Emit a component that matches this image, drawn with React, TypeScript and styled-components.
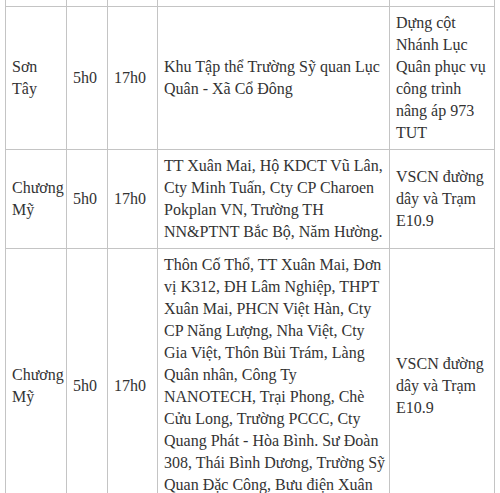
import styled, { createGlobalStyle } from 'styled-components';

const GlobalStyle = createGlobalStyle`
  html, body {
    margin: 0;
    padding: 0;
    background: #fff;
  }
  body {
    font-family: 'Liberation Serif', 'Times New Roman', serif;
    color: #333;
    overflow: hidden;
  }
`;

const Wrapper = styled.div`
  padding-left: 5px;
  width: 490px;
  margin-top: -26px;
`;

const Table = styled.table`
  width: 490px;
  border-collapse: collapse;
  table-layout: fixed;
  border-left: 1px solid #8c8c8c;
  border-right: 1px solid #8c8c8c;
`;

const Col = styled.col<{ $w?: number }>`
  ${({ $w }) => ($w ? `width: ${$w}px;` : '')}
`;

const Cell = styled.td`
  box-sizing: border-box;
  border: 1px solid #c4c4c4;
  padding: 5px 2px 5px 6px;
  font-size: 16px;
  line-height: 22px;
  vertical-align: middle;
  text-align: left;
  color: #333;
`;

const Row = styled.tr<{ $h?: number }>`
  ${({ $h }) => ($h ? `height: ${$h}px;` : '')}
`;

type Item = {
  area: string;
  from: string;
  to: string;
  place: string;
  work: string;
};

const rows: Item[] = [
  {
    area: 'Sơn Tây',
    from: '5h0',
    to: '17h0',
    place: 'Khu Tập thể Trường Sỹ quan Lục Quân - Xã Cổ Đông',
    work: 'Dựng cột Nhánh Lục Quân phục vụ công trình nâng áp 973 TUT',
  },
  {
    area: 'Chương Mỹ',
    from: '5h0',
    to: '17h0',
    place:
      'TT Xuân Mai, Hộ KDCT Vũ Lân, Cty Minh Tuấn, Cty CP Charoen Pokplan VN, Trường TH NN&PTNT Bắc Bộ, Năm Hường.',
    work: 'VSCN đường dây và Trạm E10.9',
  },
  {
    area: 'Chương Mỹ',
    from: '5h0',
    to: '17h0',
    place:
      'Thôn Cố Thổ, TT Xuân Mai, Đơn vị K312, ĐH Lâm Nghiệp, THPT Xuân Mai, PHCN Việt Hàn, Cty CP Năng Lượng, Nha Việt, Cty Gia Việt, Thôn Bùi Trám, Làng Quân nhân, Công Ty NANOTECH, Trại Phong, Chè Cửu Long, Trường PCCC, Cty Quang Phát - Hòa Bình. Sư Đoàn 308, Thái Bình Dương, Trường Sỹ Quan Đặc Công, Bưu điện Xuân Mai.',
    work: 'VSCN đường dây và Trạm E10.9',
  },
];

export default function App() {
  return (
    <>
      <GlobalStyle />
      <Wrapper>
        <Table>
          <colgroup>
            <Col $w={61} />
            <Col $w={41} />
            <Col $w={50} />
            <Col $w={232} />
            <Col />
          </colgroup>
          <tbody>
            <Row $h={32}>
              <Cell />
              <Cell />
              <Cell />
              <Cell />
              <Cell />
            </Row>
            {rows.map((r, i) => (
              <Row key={i}>
                <Cell>{r.area}</Cell>
                <Cell>{r.from}</Cell>
                <Cell>{r.to}</Cell>
                <Cell>{r.place}</Cell>
                <Cell>{r.work}</Cell>
              </Row>
            ))}
          </tbody>
        </Table>
      </Wrapper>
    </>
  );
}
